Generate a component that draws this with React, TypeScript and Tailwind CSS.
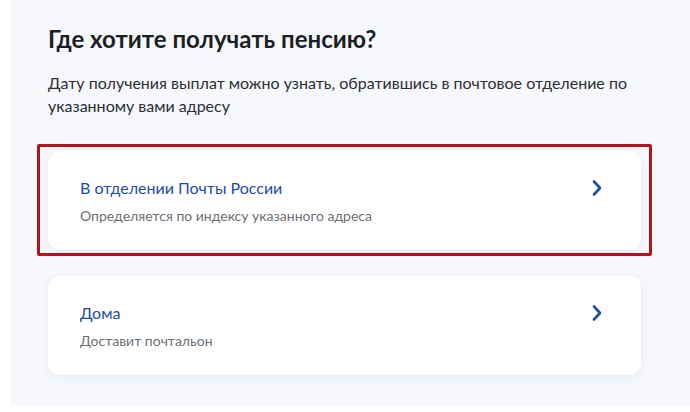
const options = [
  {
    id: "post",
    title: "В отделении Почты России",
    hint: "Определяется по индексу указанного адреса",
    selected: true,
  },
  {
    id: "home",
    title: "Дома",
    hint: "Доставит почтальон",
    selected: false,
  },
];

const Chevron = () => (
  <svg width="12" height="18" viewBox="0 0 12 18" fill="none">
    <path
      d="M3 2.5 L9 9 L3 15.5"
      stroke="#1d4ba8"
      strokeWidth="2.6"
      strokeLinecap="round"
      strokeLinejoin="round"
    />
  </svg>
);

const OptionCard = ({ title, hint }: { title: string; hint: string }) => (
  <div className="flex items-start justify-between bg-white rounded-xl shadow-[0_2px_8px_rgba(30,60,120,0.08)] h-[99px] pl-8 pr-[38px] pt-[26px]">
    <div>
      <div className="text-[16px] leading-[22px] text-[#1d4ba8]">{title}</div>
      <div className="mt-[8px] text-[14px] leading-[18px] text-[#6b6f76]">
        {hint}
      </div>
    </div>
    <div className="pt-[2px]">
      <Chevron />
    </div>
  </div>
);

export default function App() {
  return (
    <div
      className="w-[690px] h-[412px] bg-white overflow-hidden"
      style={{ fontFamily: "Lato, 'Noto Sans', sans-serif" }}
    >
      <div className="ml-[11px] h-[406px] bg-[#f6f8fc] pl-[37px] pt-[23px]">
        <div className="w-[593px]">
          <h1 className="text-[24px] leading-[32px] font-bold text-[#1c1f24]">
            Где хотите получать пенсию?
          </h1>
          <p className="mt-[16px] text-[16px] leading-[23px] text-[#2b2e33]">
            Дату получения выплат можно узнать, обратившись в почтовое отделение по указанному вами адресу
          </p>
          <div className="mt-[27px] flex flex-col gap-[20px]">
            {options.map((o) =>
              o.selected ? (
                <div
                  key={o.id}
                  className="-mx-[11px] border-[3px] border-[#b3121c] rounded-[2px] px-[8px] pt-[4px] pb-[3px]"
                >
                  <OptionCard title={o.title} hint={o.hint} />
                </div>
              ) : (
                <OptionCard key={o.id} title={o.title} hint={o.hint} />
              )
            )}
          </div>
        </div>
      </div>
    </div>
  );
}
